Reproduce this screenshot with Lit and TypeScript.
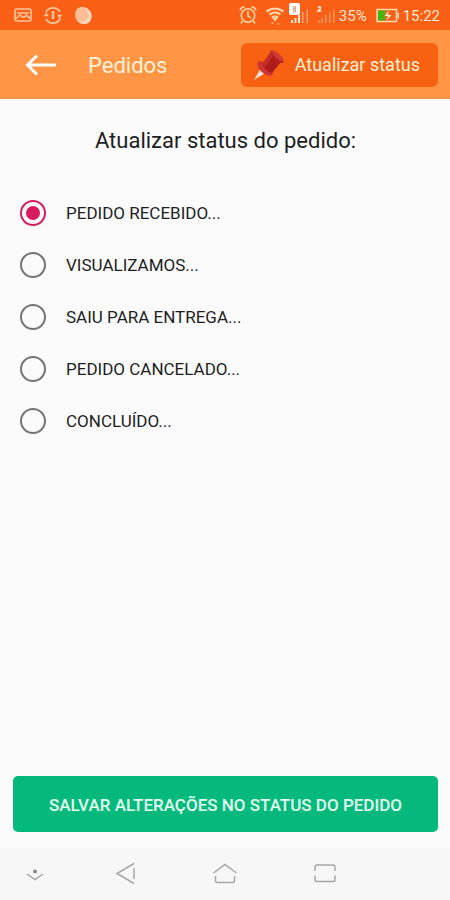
import { LitElement, html, css } from "lit";
import { customElement, state } from "lit/decorators.js";

@customElement("status-bar")
export class StatusBar extends LitElement {
  static styles = css`
    :host {
      display: flex;
      align-items: center;
      justify-content: space-between;
      height: 30px;
      padding: 0 10px 0 14px;
      box-sizing: border-box;
      background: #f96015;
      color: #ffe6cf;
      font-size: 15px;
      line-height: 20px;
    }
    .group {
      display: flex;
      align-items: center;
    }
    .left {
      gap: 12px;
    }
    svg {
      display: block;
    }
    .right {
      gap: 8px;
    }
    .tight {
      display: flex;
      align-items: center;
      gap: 4px;
    }
    span {
      padding-top: 2px;
    }
  `;

  render() {
    return html`
      <div class="group left">
        <svg width="18" height="30" viewBox="0 0 18 30" fill="none" stroke="#ffc49a" stroke-width="1.6">
          <rect x="1" y="9" width="16" height="12" rx="1.5" />
          <path d="M2 18.500l4-3.500 3 2.500 3.500-2 4 3M3 12.500l3 1 3-1 3 1 3-1" />
        </svg>
        <svg width="18" height="30" viewBox="0 0 18 30" fill="none" stroke="#ffc49a" stroke-width="1.7">
          <path d="M2 12A8 8 0 0 1 16 12M16 19A8 8 0 0 1 2 19" />
          <path d="M0 15.500h3.500L1.500 12.500M18 15.500h-3.500l2 3" stroke-width="1.400" />
          <path d="M9 11v8" stroke-width="2.400" />
        </svg>
        <svg width="18" height="30" viewBox="0 0 18 30">
          <path d="M8 7c5 0 10 4 9.500 9.500S14 24 10 24 1 20.500 1 15 4 7 8 7z" fill="#ffbf95" />
          <path d="M8 7c5 0 10 4 9.500 9.500S14 24 10 24c-3 0-5-1-7-3 8 2 13-2 11-8-1-3-3-5-6-6z" fill="#ffd5b8" />
        </svg>
      </div>
      <div class="group right">
        <svg width="18" height="30" viewBox="0 0 18 30" fill="none" stroke="#ffd9ad" stroke-width="1.5">
          <circle cx="9" cy="15.500" r="6.700" />
          <path d="M9 11v5l3 2M1 10.500q1-3.500 4.500-3.500M17 10.500Q16 7 12.500 7M3.500 21L2 23.500M14.500 21l1.500 2.500" />
        </svg>
        <div class="tight">
          <svg width="20" height="30" viewBox="0 0 20 30" fill="none" stroke="#ffd9ad" stroke-width="2.200">
            <path d="M1.500 11.500q8.500-6 17 0M4.500 14.500q5.500-4 11 0M7 17.500q3-2 6 0" />
            <path d="M8.500 18.500h3L10 20.500zM6.500 23h2M12.500 24h2" stroke-width="1.200" />
          </svg>
          <svg width="22" height="30" viewBox="0 0 22 30">
            <g fill="#ffe6cf">
              <path d="M2 20h2v3H2zM5.500 18h2v5h-2zM9 15h2v8H9z" />
              <g opacity=".5"><path d="M13 12h1.500v11H13zM17.500 9.500H19V23h-1.500z" /></g>
            </g>
            <rect x="0" y="3" width="11" height="12" rx="2" fill="#fff" />
            <path d="M4.500 6.500h2v2h-2zM4.500 9h2v2.500h-2z" fill="#fff" stroke="#e69a74" />
          </svg>
          <svg width="20" height="30" viewBox="0 0 20 30">
            <path d="M3 7.500q1.500-1.500 2.500 0 .5 1-2.500 3.500h3.500" fill="none" stroke="#fff0dd" stroke-width="1.400" />
            <path
              d="M3 20h1.500v3H3zM6.500 18H8v5H6.500zM10 15h1.500v8H10zM14 12h1.500v11H14zM18 9.500h1.500V23H18z"
              fill="#ffe6cf"
              opacity=".4"
            />
          </svg>
          <span>35%</span>
        </div>
        <div class="tight">
          <svg width="24" height="30" viewBox="0 0 24 30">
            <rect x="2" y="9.500" width="19.500" height="12" fill="#f4641c" stroke="#ffd9ad" stroke-width="1.500" />
            <rect x="3" y="10.500" width="7" height="10" fill="#45b512" />
            <rect x="22.500" y="12.500" width="1.500" height="6" fill="#ffd9ad" />
            <path d="M13.500 11l-4 5H13l-1.500 4.500 5-5.500H13z" fill="#fff0c8" />
          </svg>
          <span>15:22</span>
        </div>
      </div>
    `;
  }
}

@customElement("system-nav")
export class SystemNav extends LitElement {
  static styles = css`
    :host {
      display: grid;
      grid-template-columns: 7fr 11fr 9fr 11fr 7fr;
      height: 52px;
      background: #f7f7f7;
    }
    button {
      display: flex;
      align-items: center;
      justify-content: center;
      padding: 0;
      border: 0;
      background: none;
    }
    svg {
      fill: none;
      stroke: #a6a6a6;
      stroke-width: 1.5;
    }
  `;

  render() {
    return html`
      <button aria-label="Ocultar">
        <svg width="24" height="24" viewBox="0 0 24 24">
          <path d="M4 12l8 5.500 8-5.500" />
          <circle cx="12" cy="9.500" r="2" fill="#888" stroke="none" />
        </svg>
      </button>
      <button aria-label="Voltar">
        <svg width="24" height="24" viewBox="0 0 24 24">
          <path d="M21 1.500L4 11.500 21 21.500M21 6v11" />
        </svg>
      </button>
      <button aria-label="Início">
        <svg width="26" height="24" viewBox="0 0 26 24">
          <path d="M1.500 11L13 2.500 24.500 11M3.500 14v4.500q0 2 2 2h15q2 0 2-2V14" />
        </svg>
      </button>
      <button aria-label="Recentes">
        <svg width="24" height="24" viewBox="0 0 24 24">
          <path d="M2 9V5q0-2 2-2h16q2 0 2 2v4M2 13.500v4q0 2 2 2h16q2 0 2-2v-4" />
        </svg>
      </button>
    `;
  }
}

@customElement("app-root")
export class AppRoot extends LitElement {
  static styles = css`
    :host {
      display: flex;
      flex-direction: column;
      min-height: 100vh;
      background: #fbfbfb;
      color: #1e1e1e;
      font-family: Roboto, "Liberation Sans", sans-serif;
    }
    button {
      font-family: inherit;
      border: 0;
      cursor: pointer;
    }
    .app-bar {
      display: flex;
      align-items: center;
      height: 69px;
      padding: 0 12px 0 24px;
      background: #ff9545;
    }
    .back {
      display: flex;
      padding: 0;
      background: none;
    }
    .title {
      flex: 1;
      margin: 0 0 0 30px;
      padding-top: 2px;
      color: #fff0d8;
      font-size: 22px;
      font-weight: 400;
      line-height: 28px;
    }
    .update {
      display: flex;
      align-items: center;
      gap: 10px;
      height: 44px;
      padding: 0 18px 0 10px;
      border-radius: 6px;
      background: #f96112;
      color: #fff0d8;
      font-size: 18px;
      line-height: 24px;
    }
    main {
      display: flex;
      flex: 1;
      flex-direction: column;
      padding: 28px 12px 16px 13px;
    }
    .heading {
      margin: 0;
      text-align: center;
      font-size: 22px;
      font-weight: 400;
      line-height: 28px;
    }
    .options {
      display: grid;
      grid-auto-rows: 52px;
      margin: 32px 0 0;
      padding: 0 7px;
      border: 0;
    }
    .option {
      display: flex;
      align-items: center;
      gap: 20px;
      font-size: 17px;
      line-height: 24px;
      cursor: pointer;
    }
    .radio {
      appearance: none;
      display: grid;
      place-items: center;
      width: 26px;
      height: 26px;
      margin: 0;
      box-sizing: border-box;
      border: 2px solid #747474;
      border-radius: 50%;
    }
    .radio:checked {
      border-color: #d81b60;
    }
    .radio:checked::before {
      content: "";
      width: 14px;
      height: 14px;
      border-radius: 50%;
      background: #d81b60;
    }
    .save {
      height: 56px;
      margin-top: auto;
      padding: 2px 12px 0;
      border-radius: 5px;
      background: #05b97c;
      color: #e2fff0;
      font-size: 17px;
      font-weight: 500;
      line-height: 24px;
    }
  `;

  @state() private selected = 0;

  private options = [
    "PEDIDO RECEBIDO...",
    "VISUALIZAMOS...",
    "SAIU PARA ENTREGA...",
    "PEDIDO CANCELADO...",
    "CONCLUÍDO...",
  ];

  render() {
    return html`
      <status-bar></status-bar>
      <header class="app-bar">
        <button class="back" aria-label="Voltar">
          <svg width="34" height="26" viewBox="0 0 34 26" fill="none" stroke="#fff" stroke-width="3">
            <path d="M32 13H4M13 3.500L3.500 13l9.500 9.500" />
          </svg>
        </button>
        <h1 class="title">Pedidos</h1>
        <button class="update">
          <svg width="34" height="34" viewBox="0 0 34 34">
            <path d="M9 21.500l4.500 4L3 32z" fill="#f9dcd6" />
            <ellipse cx="14" cy="20.500" rx="9.500" ry="4.800" transform="rotate(42 14 20.500)" fill="#cf3430" />
            <path d="M19 5l11 9-9 11q-7-2-9.500-9z" fill="#ad1c18" />
            <path d="M19 5l3 2.500-8 12q-2-2-2.500-4z" fill="#c22a26" />
            <ellipse cx="26" cy="8.500" rx="9" ry="3.200" transform="rotate(42 26 8.500)" fill="#d03a36" />
            <path d="M19.500 3q4 7 13 11.500-4 1.500-9-3-4-4-4-8.500z" fill="#b3211e" />
          </svg>
          Atualizar status
        </button>
      </header>
      <main>
        <h2 class="heading" id="status-heading">Atualizar status do pedido:</h2>
        <fieldset class="options" aria-labelledby="status-heading">
          ${this.options.map(
            (label, i) => html`
              <label class="option">
                <input
                  class="radio"
                  type="radio"
                  name="status"
                  .checked=${this.selected === i}
                  @change=${() => (this.selected = i)}
                />
                ${label}
              </label>
            `,
          )}
        </fieldset>
        <button class="save">SALVAR ALTERAÇÕES NO STATUS DO PEDIDO</button>
      </main>
      <system-nav></system-nav>
    `;
  }
}
